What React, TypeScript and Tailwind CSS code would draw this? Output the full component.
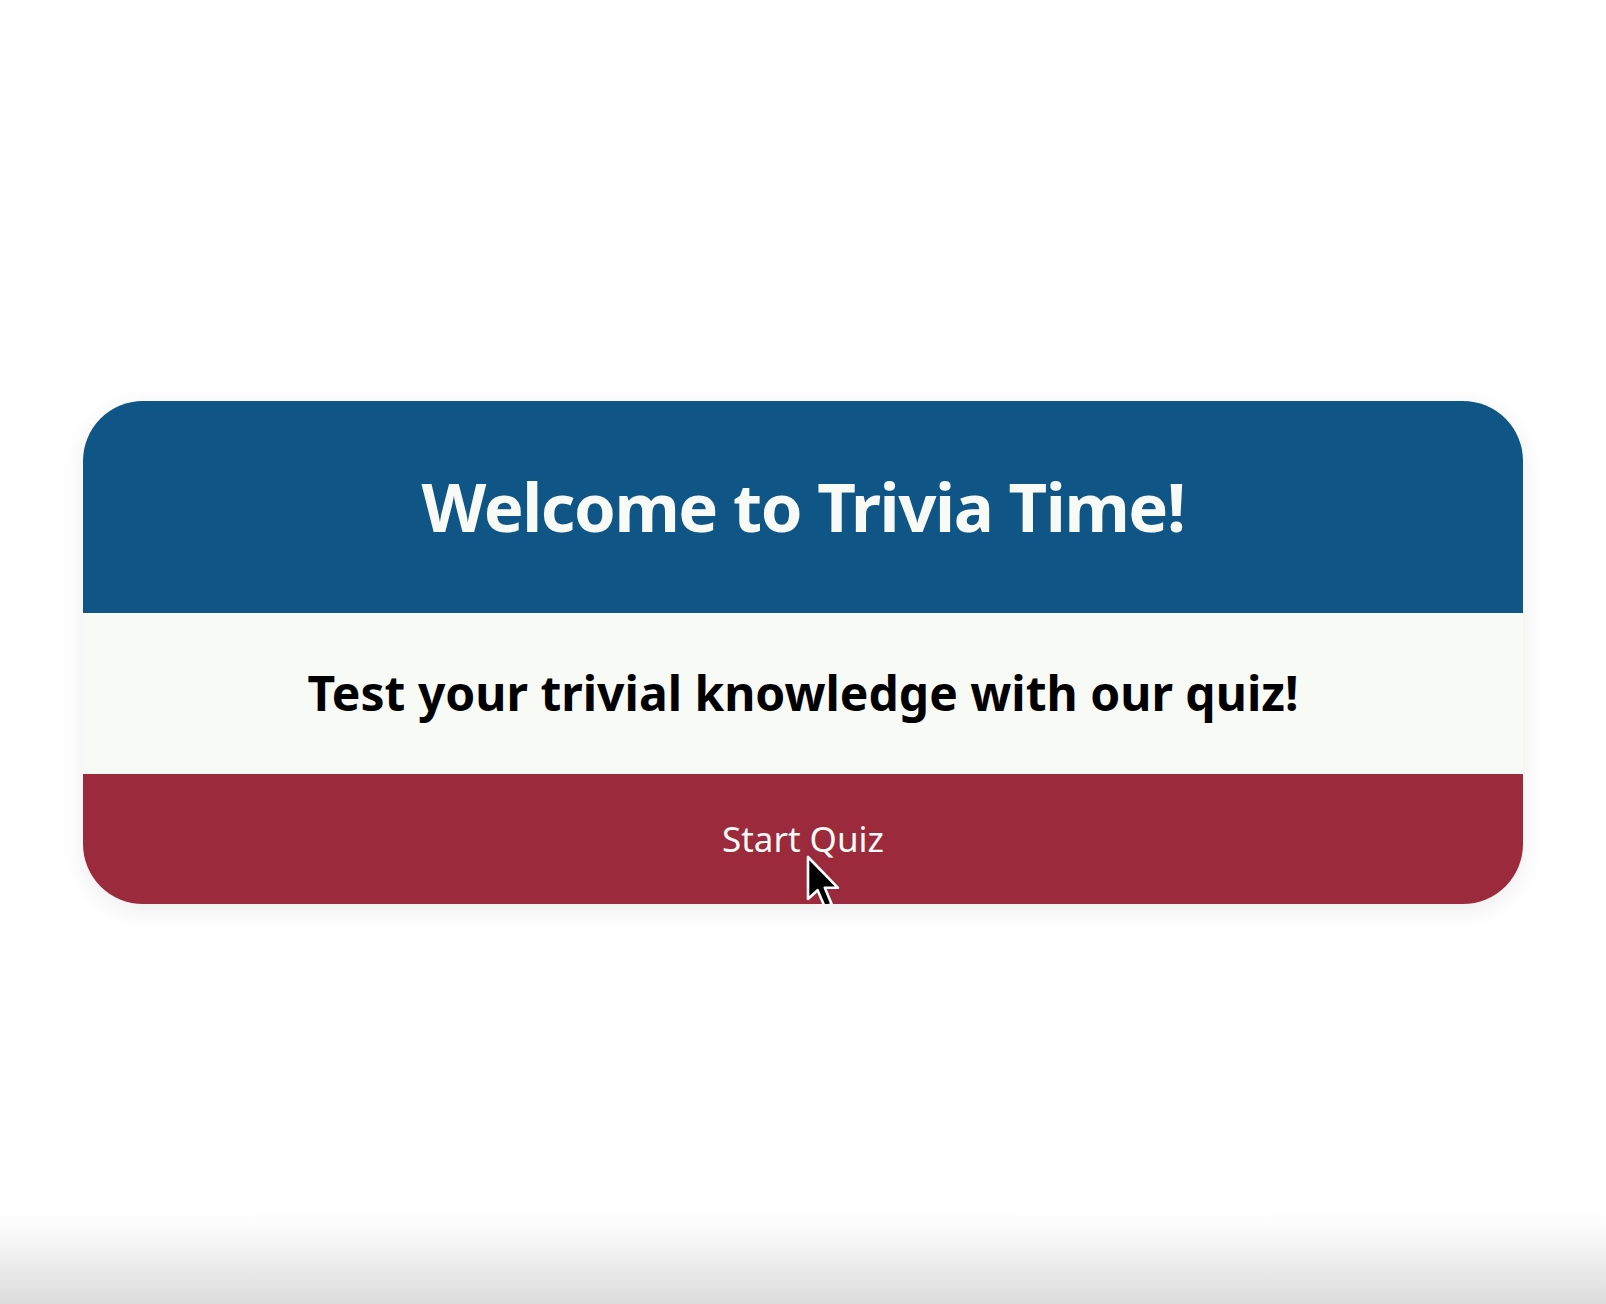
import type { FC } from "react"

const Cursor: FC = () => (
  <svg
    className="absolute left-[84px] top-[34px] pointer-events-none"
    width="36"
    height="58"
    viewBox="0 0 18 29"
  >
    <path
      d="M1 1 L1 22 L5.8 17.6 L9.4 26 L12.8 24.5 L9.4 16.4 L16 16.4 Z"
      fill="#000"
      stroke="#fff"
      strokeWidth="1.3"
      strokeLinejoin="round"
    />
  </svg>
)

const App: FC = () => {
  return (
    <div className="w-full h-[1304px] flex items-center justify-center bg-[linear-gradient(to_bottom,#fff_0%,#fff_92%,#fcfcfc_94%,#dcdcdc_100%)] font-['Noto_Sans','Open_Sans',sans-serif]">
      <div className="w-[1440px] rounded-[60px] overflow-hidden shadow-[0_6px_24px_rgba(0,0,0,0.08)]">
        <div className="h-[212px] bg-[#0f5585] flex items-center justify-center">
          <h1 className="text-[67px] font-bold text-[#f8faf6] leading-none tracking-[-1.4px]">
            Welcome to Trivia Time!
          </h1>
        </div>
        <div className="h-[161px] bg-[#f8faf6] flex items-center justify-center">
          <h2 className="text-[48px] font-bold text-black leading-none">
            Test your trivial knowledge with our quiz!
          </h2>
        </div>
        <button className="w-full h-[130px] bg-[#9b2a3c] flex items-center justify-center">
          <span className="relative text-[35px] text-[#f8faf6] leading-none">
            Start Quiz
            <Cursor />
          </span>
        </button>
      </div>
    </div>
  )
}

export default App
